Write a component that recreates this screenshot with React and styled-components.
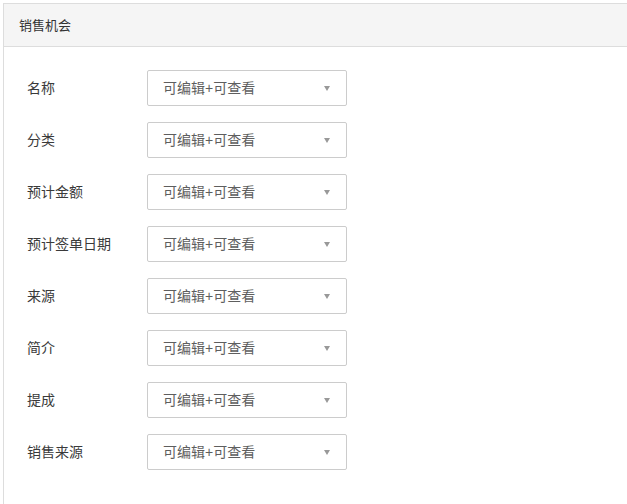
import React from "react";
import styled, { createGlobalStyle } from "styled-components";

const GlobalStyle = createGlobalStyle`
  html, body {
    margin: 0;
    padding: 0;
    background: #fff;
  }
  body {
    font-family: "Liberation Sans", "Noto Sans CJK SC", sans-serif;
    color: #333;
  }
`;

const Page = styled.div`
  padding: 3px 0 0 3px;
  width: 627px;
  height: 504px;
  box-sizing: border-box;
  overflow: hidden;
`;

const Panel = styled.div`
  border: 1px solid #ddd;
  border-right: none;
  border-bottom: none;
  height: 520px;
  background: #fff;
`;

const Header = styled.div`
  height: 42px;
  display: flex;
  align-items: center;
  padding-left: 15px;
  background: #f5f5f5;
  border-bottom: 1px solid #ddd;
  font-size: 13px;
  line-height: 16px;
  color: #333;
`;

const Title = styled.span`
  margin-top: 1px;
`;

const Body = styled.div`
  padding: 23px 0 0 23px;
  display: flex;
  flex-direction: column;
  gap: 16px;
`;

const Row = styled.div`
  display: flex;
  align-items: center;
`;

const Label = styled.div`
  width: 120px;
  font-size: 14px;
  line-height: 16px;
  margin-top: -1px;
  color: #3a3a3a;
`;

const Select = styled.div`
  height: 34px;
  width: 167px;
  border: 1px solid #ccc;
  border-radius: 2px;
  display: flex;
  align-items: center;
  justify-content: space-between;
  padding: 0 16px 0 15px;
  font-size: 14px;
  color: #5e5e5e;
  background: #fff;
`;

const Value = styled.span`
  line-height: 16px;
  margin-top: -1px;
`;

const Arrow = styled.span`
  width: 0;
  height: 0;
  border-left: 3.5px solid transparent;
  border-right: 3.5px solid transparent;
  border-top: 5px solid #999;
  margin-top: 1px;
`;

const fields = ["名称", "分类", "预计金额", "预计签单日期", "来源", "简介", "提成", "销售来源"];

export default function App() {
  return (
    <Page>
      <GlobalStyle />
      <Panel>
        <Header>
          <Title>销售机会</Title>
        </Header>
        <Body>
          {fields.map(f => (
            <Row key={f}>
              <Label>{f}</Label>
              <Select>
                <Value>可编辑+可查看</Value>
                <Arrow />
              </Select>
            </Row>
          ))}
        </Body>
      </Panel>
    </Page>
  );
}
